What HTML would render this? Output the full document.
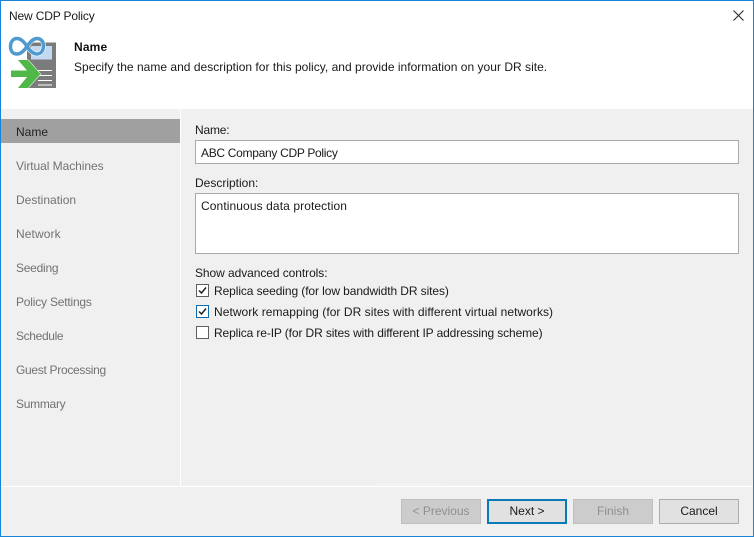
<!DOCTYPE html>
<html><head><meta charset="utf-8">
<style>
html,body{margin:0;padding:0}
body{width:754px;height:537px;overflow:hidden;position:relative;background:#fff;font-family:"Liberation Sans",sans-serif;font-size:12px;color:#1a1a1a}
.t{position:absolute;white-space:nowrap;line-height:16px;height:16px}
.n{left:16px;color:#727272}
.box{position:absolute;box-sizing:border-box;background:#fff;border:1px solid #a9a9a9}
.btn{position:absolute;top:499px;width:80px;height:25px;box-sizing:border-box;border:1px solid #adadad;background:#e1e1e1;text-align:center;line-height:23px;color:#1a1a1a}
.dis{background:#cccccc;border-color:#bfbfbf;color:#8f8f8f}
.cb{position:absolute;left:196px;width:13px;height:13px;box-sizing:border-box;border:1px solid #5f5f5f;background:#fff}
</style></head><body>
<div style="position:absolute;left:1px;top:109px;width:752px;height:427px;background:#f0f0f0"></div>
<div style="position:absolute;left:180px;top:109px;width:1px;height:377px;background:#fff"></div>
<div style="position:absolute;left:1px;top:486px;width:752px;height:1px;background:#fff"></div>
<div style="position:absolute;left:377px;top:484px;width:64px;height:1px;background:#f6f6f6"></div>
<div style="position:absolute;left:1px;top:119px;width:179px;height:24px;background:#a0a0a0"></div>
<div style="position:absolute;left:0;top:0;width:754px;height:537px;box-sizing:border-box;border:1px solid #1883d7;pointer-events:none"></div>

<div class="t" style="left:9px;top:8px;letter-spacing:-.16px">New CDP Policy</div>
<svg style="position:absolute;left:732px;top:8px" width="16" height="16" viewBox="0 0 16 16"><path d="M1.500 2.500L11.500 12.500M11.500 2.500L1.500 12.500" stroke="#222" stroke-width="1" fill="none"/></svg>

<svg style="position:absolute;left:0;top:30px" width="70" height="65" viewBox="0 0 70 65">
<rect x="27" y="12.500" width="29" height="45.500" fill="#7b7b7b"/>
<rect x="31" y="16" width="21" height="13.500" fill="#c3d9f1"/>
<path d="M38 40.500H52M38 45.500H52M38 50.500H52M38 55H52" stroke="#fff" stroke-width="1.100" fill="none"/>
<path d="M27 16.500C24 11.500 21 8.500 17 8.500C13 8.500 10.500 12 10.500 16.500C10.500 21 13 24 17 24C21 24 24 21 27 16.500C30 12 33 8.500 37 8.500C41 8.500 43.500 11.500 43.500 15.500C43.500 20.500 41 24 37 24C33 24 30 21 27 16.500Z" fill="none" stroke="#fff" stroke-width="4.600"/>
<path d="M27 16.500C24 11.500 21 8.500 17 8.500C13 8.500 10.500 12 10.500 16.500C10.500 21 13 24 17 24C21 24 24 21 27 16.500C30 12 33 8.500 37 8.500C41 8.500 43.500 11.500 43.500 15.500C43.500 20.500 41 24 37 24C33 24 30 21 27 16.500Z" fill="none" stroke="#4f9bd0" stroke-width="3.500"/>
<path d="M18 30H28L40.500 44L28 58H18L27 47H11V40.500H27Z" fill="#4fb848" stroke="#fff" stroke-width="1" paint-order="stroke"/>
</svg>

<div class="t" style="left:74px;top:39px;font-weight:bold;color:#111;letter-spacing:.15px">Name</div>
<div class="t" style="left:74px;top:59px;letter-spacing:.02px">Specify the name and description for this policy, and provide information on your DR site.</div>

<div class="t" style="left:16px;top:124px;color:#222">Name</div>
<div class="t n" style="top:158px;letter-spacing:-.06px">Virtual Machines</div>
<div class="t n" style="top:192px">Destination</div>
<div class="t n" style="top:226px;letter-spacing:.1px">Network</div>
<div class="t n" style="top:260px;letter-spacing:-.25px">Seeding</div>
<div class="t n" style="top:294px;letter-spacing:-.2px">Policy Settings</div>
<div class="t n" style="top:328px;letter-spacing:-.35px">Schedule</div>
<div class="t n" style="top:362px;letter-spacing:-.3px">Guest Processing</div>
<div class="t n" style="top:396px;letter-spacing:-.28px">Summary</div>

<div class="t" style="left:195px;top:122px;letter-spacing:-.2px">Name:</div>
<div class="box" style="left:195px;top:140px;width:544px;height:24px"></div>
<div class="t" style="left:201px;top:145px;letter-spacing:-.3px">ABC Company CDP Policy</div>
<div class="t" style="left:195px;top:175px">Description:</div>
<div class="box" style="left:195px;top:193px;width:544px;height:61px"></div>
<div class="t" style="left:201px;top:198px;letter-spacing:.1px">Continuous data protection</div>

<div class="t" style="left:195px;top:265px;letter-spacing:-.07px">Show advanced controls:</div>
<div class="cb" style="top:284px"><svg width="11" height="11" viewBox="0 0 11 11" style="display:block"><path d="M2 5.500L4.500 8L9 2.500" fill="none" stroke="#222" stroke-width="1.500"/></svg></div>
<div class="t" style="left:214px;top:283px;letter-spacing:-.09px">Replica seeding (for low bandwidth DR sites)</div>
<div class="cb" style="top:305px;border-color:#0f6ba8"><svg width="11" height="11" viewBox="0 0 11 11" style="display:block"><path d="M2 5.500L4.500 8L9 2.500" fill="none" stroke="#222" stroke-width="1.500"/></svg></div>
<div class="t" style="left:214px;top:304px;letter-spacing:.05px">Network remapping (for DR sites with different virtual networks)</div>
<div class="cb" style="top:326px"></div>
<div class="t" style="left:214px;top:325px;letter-spacing:-.12px">Replica re-IP (for DR sites with different IP addressing scheme)</div>

<div class="btn dis" style="left:401px">&lt; Previous</div>
<div class="btn" style="left:487px;border:2px solid #0a7ab8;line-height:21px">Next &gt;</div>
<div class="btn dis" style="left:573px">Finish</div>
<div class="btn" style="left:659px">Cancel</div>
</body></html>
